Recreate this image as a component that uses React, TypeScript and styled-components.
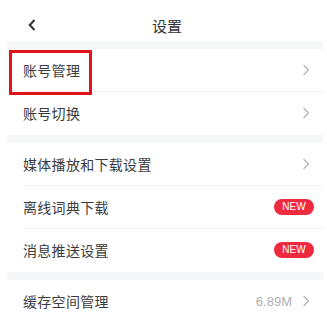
import React from 'react'
import styled, { createGlobalStyle } from 'styled-components'

const Global = createGlobalStyle`
  html, body {
    margin: 0;
    padding: 0;
    background: #fff;
  }
  body {
    font-family: "Noto Sans CJK SC", "Noto Sans", sans-serif;
  }
`

type Item = {
  label: string
  extra?: string
  badge?: boolean
  highlight?: boolean
}

const groups: Item[][] = [
  [{ label: '账号管理', highlight: true }, { label: '账号切换' }],
  [{ label: '媒体播放和下载设置' }, { label: '离线词典下载', badge: true }, { label: '消息推送设置', badge: true }],
  [{ label: '缓存空间管理', extra: '6.89M' }],
]

const Chevron = () => (
  <svg width="8" height="12" viewBox="0 0 8 12">
    <path d="M1.5 1 L6.5 6 L1.5 11" fill="none" stroke="#b0b0b0" strokeWidth="1.1" />
  </svg>
)

const BackIcon = () => (
  <svg width="10" height="14" viewBox="0 0 10 14">
    <path d="M7.5 2 L2.8 7 L7.5 12" fill="none" stroke="#3a3a3a" strokeWidth="2.2" />
  </svg>
)

const App = () => {
  return (
    <>
      <Global />
      <Page>
        <Header>
          <Back>
            <BackIcon />
          </Back>
          <Title>设置</Title>
        </Header>
        {groups.map((group, gi) => (
          <Group key={gi}>
            {group.map((item, i) => (
              <Row key={item.label} $last={i === group.length - 1}>
                <Label>{item.label}</Label>
                {item.badge ? (
                  <Badge>NEW</Badge>
                ) : (
                  <Right>
                    {item.extra && <Extra>{item.extra}</Extra>}
                    <Chevron />
                  </Right>
                )}
                {item.highlight && <Highlight />}
              </Row>
            ))}
          </Group>
        ))}
      </Page>
    </>
  )
}

export default App

const Page = styled.div`
  margin-left: 7px;
  width: 316px;
  background: #fff;
`

const Header = styled.div`
  position: relative;
  height: 41px;
  display: flex;
  align-items: center;
  justify-content: center;
`

const Back = styled.div`
  position: absolute;
  left: 20px;
  top: 18px;
  display: flex;
`

const Title = styled.div`
  font-size: 15px;
  color: #333;
  margin-left: 4px;
  margin-top: 10px;
`

const Group = styled.div`
  border-top: 8px solid #f6f7f9;
`

const Row = styled.div<{ $last: boolean }>`
  position: relative;
  height: 42px;
  margin-left: 16px;
  padding-right: 9px;
  display: flex;
  align-items: center;
  justify-content: space-between;
  border-bottom: 1px solid ${(p) => (p.$last ? 'transparent' : '#f2f2f2')};
`

const Label = styled.span`
  font-size: 14px;
  color: #3c3c3c;
  letter-spacing: 0.3px;
`

const Right = styled.div`
  display: flex;
  align-items: center;
  gap: 10px;
  padding-right: 4px;
`

const Extra = styled.span`
  font-family: "Liberation Sans", Arial, sans-serif;
  font-size: 13px;
  color: #b0b0b0;
`

const Badge = styled.span`
  width: 40px;
  height: 16px;
  border-radius: 8px;
  background: #ee2a3f;
  color: #fff;
  font-family: "Liberation Sans", Arial, sans-serif;
  font-size: 10px;
  line-height: 16px;
  text-align: center;
`

const Highlight = styled.div`
  position: absolute;
  left: -14px;
  top: 1px;
  width: 83px;
  height: 45px;
  box-sizing: border-box;
  border: 3px solid #e0121a;
  pointer-events: none;
`
